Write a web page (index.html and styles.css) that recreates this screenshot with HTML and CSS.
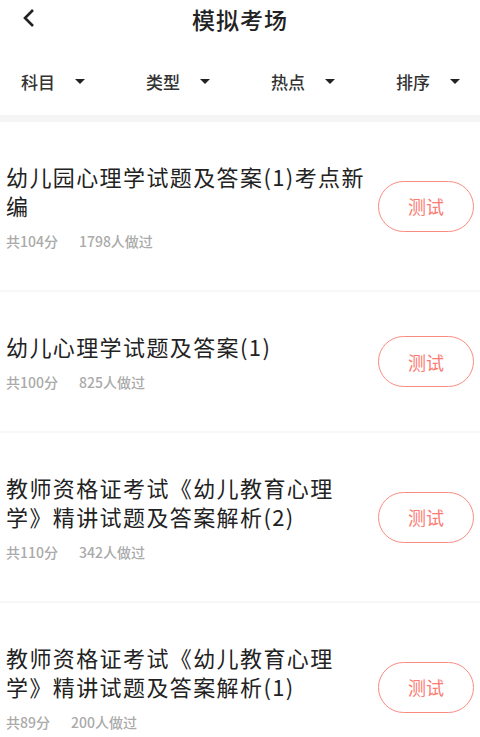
FILE: index.html
```html
<!DOCTYPE html>
<html lang="zh-CN">
<head>
    <meta charset="UTF-8">
    <meta name="viewport" content="width=device-width, initial-scale=1.0">
    <title>模拟考场</title>
    <link rel="stylesheet" href="styles.css">
</head>
<body>
    <header class="topbar">
        <span class="back">
            <svg width="14" height="20" viewBox="0 0 14 20"><path d="M11 2 L3 10 L11 18" fill="none" stroke="#222" stroke-width="2.6" stroke-linejoin="miter"/></svg>
        </span>
        <h1>模拟考场</h1>
    </header>

    <nav class="filters">
        <div class="filter">科目 <span class="caret"></span></div>
        <div class="filter">类型 <span class="caret"></span></div>
        <div class="filter">热点 <span class="caret"></span></div>
        <div class="filter">排序 <span class="caret"></span></div>
    </nav>

    <ul class="exam-list">
        <li class="exam">
            <div class="info">
                <h2>幼儿园心理学试题及答案(1)考点新编</h2>
                <p class="meta"><span>共104分</span><span>1798人做过</span></p>
            </div>
            <button class="test-btn">测试</button>
        </li>
        <li class="exam">
            <div class="info">
                <h2>幼儿心理学试题及答案(1)</h2>
                <p class="meta"><span>共100分</span><span>825人做过</span></p>
            </div>
            <button class="test-btn">测试</button>
        </li>
        <li class="exam">
            <div class="info">
                <h2>教师资格证考试《幼儿教育心理学》精讲试题及答案解析(2)</h2>
                <p class="meta"><span>共110分</span><span>342人做过</span></p>
            </div>
            <button class="test-btn">测试</button>
        </li>
        <li class="exam">
            <div class="info">
                <h2>教师资格证考试《幼儿教育心理学》精讲试题及答案解析(1)</h2>
                <p class="meta"><span>共89分</span><span>200人做过</span></p>
            </div>
            <button class="test-btn">测试</button>
        </li>
    </ul>
</body>
</html>
```

FILE: styles.css
```css
body {
    margin: 0;
    padding: 0;
    background-color: #fff;
    font-family: "Noto Sans CJK SC", "Noto Sans", sans-serif;
    color: #222;
}
.topbar {
    position: relative;
    height: 40px;
    display: flex;
    align-items: center;
    justify-content: center;
    padding-bottom: 3px;
    box-sizing: border-box;
}
.topbar h1 {
    margin: 0;
    font-size: 23px;
    font-weight: 500;
    letter-spacing: 1px;
    line-height: 30px;
}
.back {
    position: absolute;
    left: 22px;
    top: 8px;
}
.filters {
    height: 82px;
    display: flex;
    align-items: center;
    justify-content: space-between;
    padding: 7px 20px 0 21px;
    box-sizing: border-box;
    border-bottom: 7px solid #f5f5f5;
}
.filter {
    display: flex;
    align-items: center;
    gap: 20px;
    font-size: 17px;
    font-weight: 500;
    color: #333;
}
.caret {
    width: 0;
    height: 0;
    border-left: 5px solid transparent;
    border-right: 5px solid transparent;
    border-top: 5px solid #222;
}
.exam-list {
    list-style: none;
    margin: 0;
    padding: 0;
}
.exam {
    display: flex;
    align-items: center;
    padding: 40px 6px 40px 6px;
    border-bottom: 2px solid #f7f7f7;
}
.info {
    flex: 1;
    margin-right: 8px;
}
.info h2 {
    margin: 0;
    font-size: 22px;
    font-weight: 400;
    line-height: 29px;
    letter-spacing: 1.4px;
    text-spacing-trim: space-all;
    color: #222;
}
.meta {
    margin: 12px 0 0;
    font-size: 14px;
    line-height: 18px;
    font-weight: 500;
    color: #aaa;
    display: flex;
    gap: 21px;
}
.test-btn {
    width: 96px;
    height: 51px;
    border: 1.5px solid #fa8b82;
    border-radius: 26px;
    background: #fff;
    color: #fa7b72;
    font-family: inherit;
    font-size: 18px;
    padding: 0;
}
```
